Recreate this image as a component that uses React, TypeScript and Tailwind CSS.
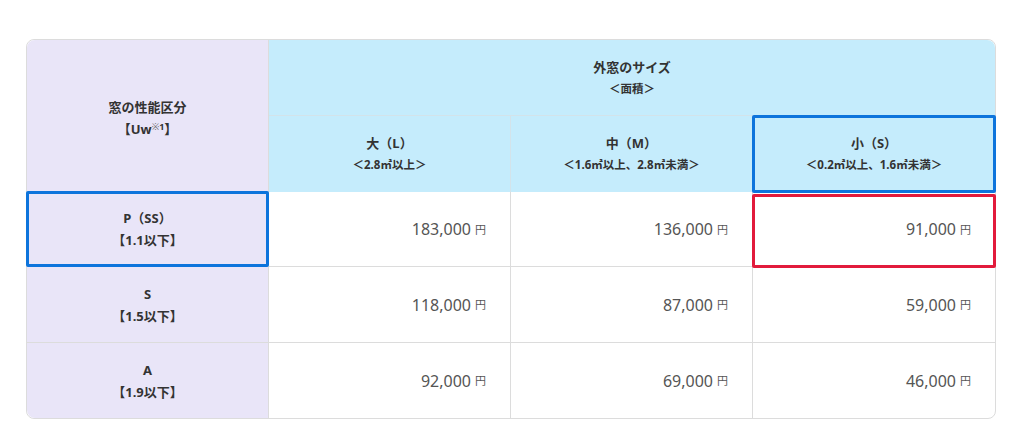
import React from 'react';

const sizes = [
  { label: '大（L）', range: '＜2.8㎡以上＞' },
  { label: '中（M）', range: '＜1.6㎡以上、2.8㎡未満＞' },
  { label: '小（S）', range: '＜0.2㎡以上、1.6㎡未満＞' },
];

const rows = [
  { grade: 'P（SS）', uw: '【1.1以下】', prices: ['183,000', '136,000', '91,000'] },
  { grade: 'S', uw: '【1.5以下】', prices: ['118,000', '87,000', '59,000'] },
  { grade: 'A', uw: '【1.9以下】', prices: ['92,000', '69,000', '46,000'] },
];

const font = { fontFamily: '"Noto Sans", "Noto Sans CJK JP", sans-serif' };

const Highlight = ({ color }: { color: 'blue' | 'red' }) => (
  <div
    className={
      color === 'blue'
        ? 'absolute -inset-[1px] border-[3px] border-[#0d74dc] rounded-[2px] pointer-events-none z-10'
        : 'absolute inset-x-[-1px] top-[2px] bottom-[-2px] border-[3px] border-[#e21b3c] rounded-[2px] pointer-events-none z-10'
    }
  />
);

export default function App() {
  return (
    <div className="w-[1024px] h-[428px] bg-white pt-[39px]" style={font}>
      <div className="ml-[26px] w-[970px] grid grid-cols-4 grid-rows-[76px_76px_75px_76px_75px] border border-[#dcdcdc] rounded-lg text-[#333]">
        <div className="row-span-2 bg-[#e9e5f8] rounded-tl-lg border-r border-[#dcdcdc] flex flex-col items-center justify-center text-[13px] font-bold leading-[22px] pt-1">
          <span>窓の性能区分</span>
          <span>
            【Uw<sup className="text-[9px] text-[#666] font-normal">※</sup>
            <sup className="text-[9px]">1</sup>】
          </span>
        </div>
        <div className="col-span-3 bg-[#c5ecfc] rounded-tr-lg border-b border-[#d3e3ea] flex flex-col items-center justify-center">
          <span className="text-[13px] font-bold leading-[21px]">外窓のサイズ</span>
          <span className="text-[11.5px] font-bold leading-[21px]">＜面積＞</span>
        </div>
        {sizes.map((s, i) => (
          <div
            key={s.label}
            className={`relative bg-[#c5ecfc] flex flex-col items-center justify-center ${i < 2 ? 'border-r border-[#d3e3ea]' : ''}`}
          >
            <span className="text-[13px] font-bold leading-[22px]">{s.label}</span>
            <span className="text-[11.5px] font-bold leading-[22px]">{s.range}</span>
            {i === 2 && <Highlight color="blue" />}
          </div>
        ))}
        {rows.map((r, ri) => (
          <React.Fragment key={r.grade}>
            <div
              className={`relative bg-[#e9e5f8] border-r border-[#dcdcdc] flex flex-col items-center justify-center text-[13px] font-bold leading-[22px] ${ri < 2 ? 'border-b' : 'rounded-bl-lg'}`}
            >
              <span>{r.grade}</span>
              <span>{r.uw}</span>
              {ri === 0 && <Highlight color="blue" />}
            </div>
            {r.prices.map((p, pi) => (
              <div
                key={pi}
                className={`relative flex items-center justify-end pr-[24px] text-[#555] border-[#dcdcdc] ${pi < 2 ? 'border-r' : ''} ${ri < 2 ? 'border-b' : ''} ${ri === 2 && pi === 2 ? 'rounded-br-lg' : ''}`}
              >
                <span className="text-[16px]">{p}</span>
                <span className="text-[11px] ml-[4px] mt-[2px]">円</span>
                {ri === 0 && pi === 2 && <Highlight color="red" />}
              </div>
            ))}
          </React.Fragment>
        ))}
      </div>
    </div>
  );
}
